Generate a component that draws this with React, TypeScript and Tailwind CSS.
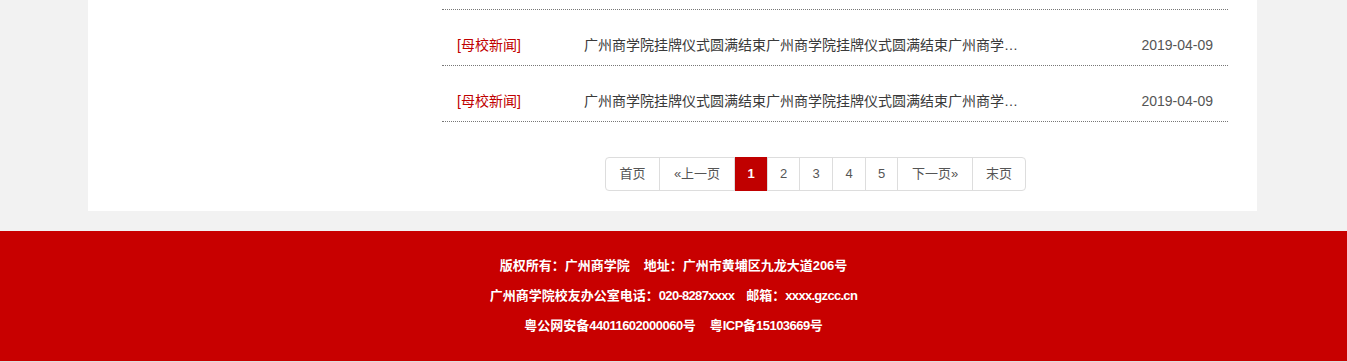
import React from "react";

const FONT = { fontFamily: '"Liberation Sans", "Noto Sans CJK SC", sans-serif' };

const rows = [
  { cat: "[母校新闻]", title: "广州商学院挂牌仪式圆满结束广州商学院挂牌仪式圆满结束广州商学院挂牌仪式圆满结束", date: "2019-04-09" },
  { cat: "[母校新闻]", title: "广州商学院挂牌仪式圆满结束广州商学院挂牌仪式圆满结束广州商学院挂牌仪式圆满结束", date: "2019-04-09" },
];

const pages = [
  { label: "首页", w: "w-[53px]" },
  { label: "«上一页", w: "w-[75px]" },
  { label: "1", w: "w-[33px]", active: true },
  { label: "2", w: "w-[32px]" },
  { label: "3", w: "w-[33px]" },
  { label: "4", w: "w-[33px]" },
  { label: "5", w: "w-[32px]" },
  { label: "下一页»", w: "w-[75px]" },
  { label: "末页", w: "w-[53px]" },
];

export default function App() {
  return (
    <div className="w-full h-[362px] bg-[#f2f2f2] overflow-hidden" style={FONT}>
      <div className="w-[1169px] ml-[88px] bg-white flex">
        <div className="w-[354px] shrink-0" />
        <div className="w-[786px] shrink-0">
          <div className="h-[10px] border-b border-dotted border-[#777]" />
          {rows.map((r, i) => (
            <div
              key={i}
              className="flex items-center h-[56px] pt-[15px] border-b border-dotted border-[#777] text-[14px] leading-[20px]"
            >
              <div className="w-[142px] pl-[15px] text-[#c00000] shrink-0">{r.cat}</div>
              <div className="w-[434px] text-[#3a3a3a] truncate shrink-0">{r.title}</div>
              <div className="flex-1 text-right pr-[15px] text-[#555]">{r.date}</div>
            </div>
          ))}
          <div className="pl-[163px] pt-[35px] pb-[20px] flex">
            <div className="flex border border-[#ddd] rounded-[4px] h-[34px] text-[13px] text-[#555]">
              {pages.map((p, i) => (
                <div
                  key={i}
                  className={
                    "flex items-center justify-center shrink-0 " +
                    p.w +
                    " " +
                    (i > 0 ? "border-l border-[#ddd] " : "") +
                    (p.active ? "bg-[#c00000] text-white font-bold border-[#c00000] -my-px h-[34px]" : "")
                  }
                >
                  {p.label}
                </div>
              ))}
            </div>
          </div>
        </div>
      </div>
      <div className="mt-[20px] bg-[#c80000] h-[130px] pt-[20px] text-white text-[13px] font-bold leading-[30px] text-center">
        <div>
          版权所有：广州商学院<span className="ml-[14px]">地址：广州市黄埔区九龙大道206号</span>
        </div>
        <div>
          广州商学院校友办公室电话：<span className="tracking-[-0.7px]">020-8287xxxx</span>
          <span className="ml-[12px]">邮箱：</span>
          <span className="tracking-[-0.7px]">xxxx.gzcc.cn</span>
        </div>
        <div>
          粤公网安备<span className="tracking-[-0.5px]">44011602000060</span>号
          <span className="ml-[14px]">粤</span>
          <span className="tracking-[-0.5px]">ICP</span>备<span className="tracking-[-0.5px]">15103669</span>号
        </div>
      </div>
      <div className="h-px bg-[#ddd]" />
    </div>
  );
}
